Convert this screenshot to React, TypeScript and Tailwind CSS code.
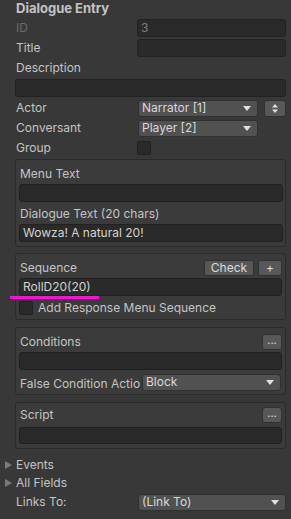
import type { ReactNode } from 'react'

const labelCls = 'text-[12px] text-[#c4c4c4] whitespace-nowrap leading-none'

function TextField({ value, dim, className = '' }: { value?: string; dim?: boolean; className?: string }) {
  return (
    <div className={`flex items-center bg-[#2a2a2a] border border-[#212121] rounded-[3px] px-[3px] text-[12px] leading-none ${dim ? 'text-[#7f7f7f]' : 'text-[#d2d2d2]'} ${className}`}>
      {value}
    </div>
  )
}

function Arrow() {
  return (
    <svg width="8" height="5" viewBox="0 0 8 5" className="shrink-0">
      <path d="M0 0 L8 0 L4 5 Z" fill="#e0e0e0" />
    </svg>
  )
}

function Popup({ value, className = '' }: { value: string; className?: string }) {
  return (
    <div className={`flex items-center justify-between h-[17px] bg-[#515151] border border-[#303030] rounded-[3px] pl-[3px] pr-[6px] text-[12px] leading-none text-[#d8d8d8] ${className}`}>
      <span>{value}</span>
      <Arrow />
    </div>
  )
}

function MiniButton({ children, className = '' }: { children: ReactNode; className?: string }) {
  return (
    <div className={`flex items-center justify-center h-[16px] bg-[#585858] border border-[#303030] rounded-[3px] text-[12px] leading-none text-[#dcdcdc] ${className}`}>
      {children}
    </div>
  )
}

function Checkbox() {
  return <div className="w-[14px] h-[14px] bg-[#2a2a2a] border border-[#212121] rounded-[2px]" />
}

function Box({ children, className = '' }: { children: ReactNode; className?: string }) {
  return (
    <div className={`bg-[#3b3b3b] border border-[#2a2a2a] rounded-[3px] pl-[3px] pr-[2px] ${className}`}>
      {children}
    </div>
  )
}

function Row({ label, dim, children }: { label: string; dim?: boolean; children?: ReactNode }) {
  return (
    <div className="flex items-center h-[20px]">
      <div className={`w-[122px] pl-[1px] text-[12px] leading-none ${dim ? 'text-[#6c6c6c]' : 'text-[#c4c4c4]'}`}>{label}</div>
      <div className="flex-1 flex items-center">{children}</div>
    </div>
  )
}

function Foldout({ label }: { label: string }) {
  return (
    <div className="flex items-center h-[18px] -ml-[10px]">
      <svg width="7" height="8" viewBox="0 0 7 8" className="mr-[4px]">
        <path d="M0 0 L7 4 L0 8 Z" fill="#7a7a7a" />
      </svg>
      <span className={labelCls}>{label}</span>
    </div>
  )
}

export default function App() {
  return (
    <div className="relative w-[291px] h-[519px] overflow-hidden bg-[#383838]" style={{ fontFamily: 'Inter, "Noto Sans", sans-serif' }}>
      <div className="pl-[15px] pr-[5px]">
        <div className="flex items-center h-[18px] pb-[2px] pl-[1px]">
          <span className="text-[13px] font-bold text-[#c4c4c4] leading-none">Dialogue Entry</span>
        </div>
        <Row label="ID" dim>
          <TextField value="3" dim className="w-full h-[18px]" />
        </Row>
        <Row label="Title">
          <TextField className="w-full h-[18px]" />
        </Row>
        <div className="flex items-center h-[20px] pl-[1px]">
          <span className={labelCls}>Description</span>
        </div>
        <div className="flex items-center h-[20px]">
          <TextField className="w-full h-[18px]" />
        </div>
        <Row label="Actor">
          <Popup value="Narrator [1]" className="ml-[1px] w-[120px]" />
          <MiniButton className="ml-[6px] w-[22px] h-[17px]">
            <svg width="6" height="9" viewBox="0 0 6 9">
              <path d="M0 3.5 L3 0 L6 3.5 Z M0 5.5 L6 5.5 L3 9 Z" fill="#e0e0e0" />
            </svg>
          </MiniButton>
        </Row>
        <Row label="Conversant">
          <Popup value="Player [2]" className="ml-[1px] w-[120px]" />
        </Row>
        <Row label="Group">
          <Checkbox />
        </Row>

        <Box className="mt-[1px] pt-[4px] pb-[4px]">
          <div className="flex items-center h-[20px] pl-[1px]">
            <span className={labelCls}>Menu Text</span>
          </div>
          <TextField className="h-[18px]" />
          <div className="flex items-center h-[20px] mt-[2px] pl-[1px]">
            <span className={labelCls}>Dialogue Text (20 chars)</span>
          </div>
          <TextField value="Wowza! A natural 20!" className="h-[18px]" />
        </Box>

        <Box className="mt-[6px] pt-[4px] pb-[1px]">
          <div className="flex items-center h-[20px] pl-[1px]">
            <span className={`${labelCls} flex-1`}>Sequence</span>
            <MiniButton className="w-[50px]">Check</MiniButton>
            <MiniButton className="w-[24px] ml-[4px] mr-[1px]">+</MiniButton>
          </div>
          <TextField value="RollD20(20)" className="h-[18px] mr-[1px]" />
          <div className="flex items-center h-[20px] mt-[2px]">
            <Checkbox />
            <span className={`${labelCls} ml-[5px]`}>Add Response Menu Sequence</span>
          </div>
        </Box>

        <Box className="mt-[7px] pt-[4px] pb-[2px]">
          <div className="flex items-center h-[20px] pl-[1px]">
            <span className={`${labelCls} flex-1`}>Conditions</span>
            <MiniButton className="w-[20px] mr-[1px]">
              <span className="-mt-[4px] text-[11px]">...</span>
            </MiniButton>
          </div>
          <TextField className="h-[18px] mr-[1px]" />
          <div className="flex items-center h-[20px] mt-[2px]">
            <div className="w-[120px] pl-[1px]">
              <span className={labelCls}>False Condition Actio</span>
            </div>
            <Popup value="Block" className="ml-[3px] flex-1 mr-[2px]" />
          </div>
        </Box>

        <Box className="mt-[7px] pt-[2px] pb-[4px]">
          <div className="flex items-center h-[20px] pl-[1px]">
            <span className={`${labelCls} flex-1`}>Script</span>
            <MiniButton className="w-[20px] mr-[1px]">
              <span className="-mt-[4px] text-[11px]">...</span>
            </MiniButton>
          </div>
          <TextField className="h-[17px] mt-[2px] mr-[1px]" />
        </Box>

        <div className="mt-[7px]">
          <Foldout label="Events" />
          <Foldout label="All Fields" />
        </div>
        <Row label="Links To:">
          <Popup value="(Link To)" className="ml-[1px] w-full" />
        </Row>
      </div>

      <div className="absolute left-[10px] top-[296px] w-[89px] h-[3px] bg-[#f414d4]" />
    </div>
  )
}
